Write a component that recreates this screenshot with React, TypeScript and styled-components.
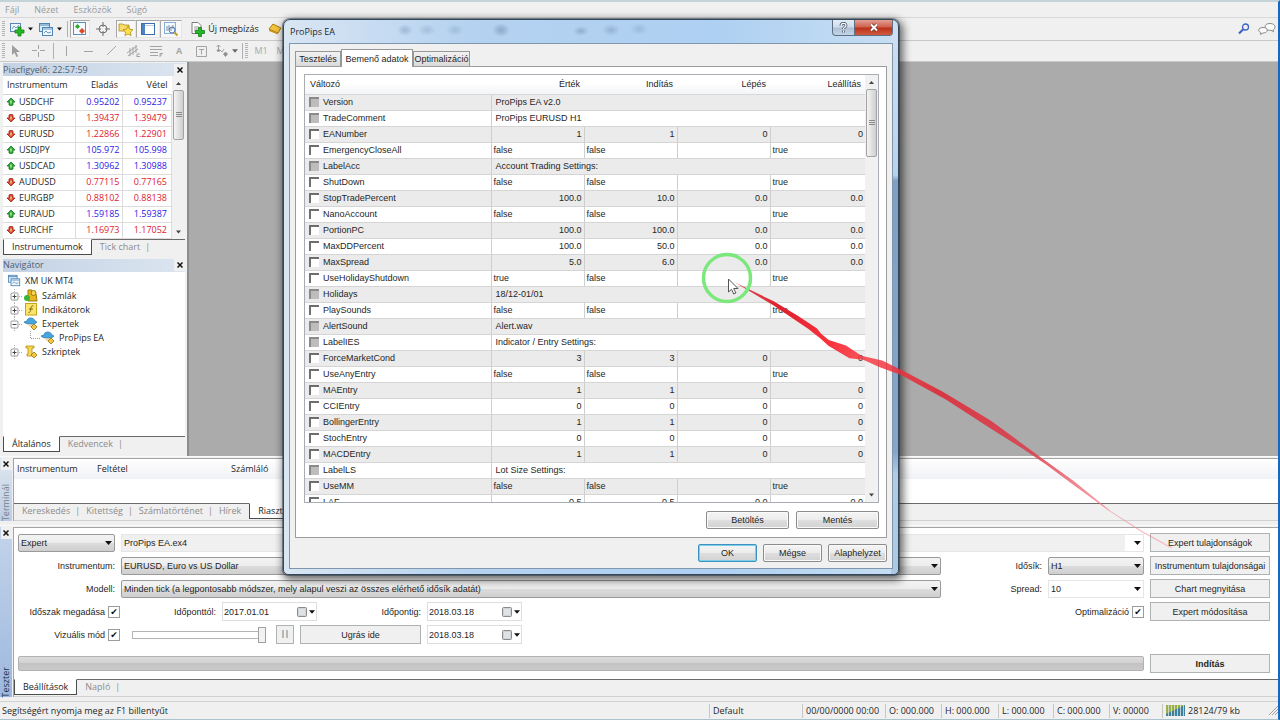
import React from "react";
import styled, { createGlobalStyle, css } from "styled-components";

const UI = `"Open Sans", "Noto Sans", sans-serif`;
const DIALOG = `"Liberation Sans", Arial, sans-serif`;

const GlobalStyle = createGlobalStyle`
  *, *::before, *::after { box-sizing: border-box; }
  body { margin: 0; background: #1c6fc4; }
  button, input, select { font: inherit; color: inherit; margin: 0; }
  table { border-collapse: collapse; border-spacing: 0; }
  svg { flex: none; }
`;

/* ---------- main window ---------- */

const Window = styled.div`
  position: relative;
  display: flex;
  flex-direction: column;
  min-height: 100vh;
  overflow: hidden;
  background: #f0f0f0;
  border-top: 2px solid #c3d3d8;
  border-right: 2px solid #1668c0;
  border-bottom: 2px solid #a9c3cc;
  font: 9px/14px ${UI};
  color: #1f1f1f;
`;

const MenuBar = styled.nav`
  display: flex;
  gap: 15px;
  height: 16px;
  padding-left: 5px;
  border-bottom: 1px solid #d8d8d8;
`;

const MenuItem = styled.button`
  padding: 0;
  border: 0;
  background: none;
  color: #9a9a9a;
`;

const Toolbar = styled.div<{ $h: number }>`
  display: flex;
  align-items: center;
  height: ${(p) => p.$h}px;
  padding: 0 0 0 2px;
  border-bottom: 1px solid #c9c9c9;
`;

const Grip = styled.span`
  width: 3px;
  height: 16px;
  margin-right: 2px;
  background: repeating-linear-gradient(#b4b4b4 0 1px, #f0f0f0 1px 2px);
`;

const Divider = styled.span`
  width: 1px;
  height: 16px;
  margin: 0 2px;
  background: #b0b0b0;
`;

const Tool = styled.button<{ $w?: number; $on?: boolean }>`
  display: flex;
  align-items: center;
  justify-content: center;
  gap: 3px;
  width: ${(p) => (p.$w ? `${p.$w}px` : "auto")};
  height: 18px;
  padding: 0;
  border: 1px solid transparent;
  background: none;
  white-space: nowrap;
  color: #1c1c1c;
  ${(p) =>
    p.$on &&
    css`
      border-color: #a8a8a8 #e6e6e6 #e6e6e6 #a8a8a8;
      background: #f8f8f8;
    `}
`;

const FadedTool = styled(Tool)`
  color: #a8a8a8;
`;

const Spacer = styled.span`
  flex: 1;
`;

const Workspace = styled.main`
  display: flex;
  flex: 1;
  min-height: 394px;
  background: #ababab;
`;

const Sidebar = styled.aside`
  display: flex;
  flex-direction: column;
  width: 189px;
  padding: 1px 2px 4px 3px;
  gap: 4px;
  background: #f0f0f0;
  border-right: 2px solid #8c8c8c;
`;

const Panel = styled.section<{ $grow?: boolean }>`
  display: flex;
  flex-direction: column;
  flex: ${(p) => (p.$grow ? 1 : "none")};
`;

const PanelTitle = styled.header`
  display: flex;
  justify-content: space-between;
  align-items: center;
  height: 13px;
  background: linear-gradient(90deg, #c3d2e4, #dbe5f0);
  color: #4f5f70;
`;

const CloseButton = styled.button`
  display: flex;
  align-items: center;
  justify-content: center;
  width: 11px;
  height: 12px;
  padding: 0;
  border: 0;
  background: #f0f0f0;
`;

const PanelBody = styled.div`
  display: flex;
  flex: 1;
  background: #fff;
`;

const QuoteTable = styled.table`
  flex: 1;
  table-layout: fixed;
  background: #fff;
  th {
    height: 18px;
    padding: 0 4px;
    font-weight: 400;
    text-align: right;
    border-bottom: 1px solid #d4d4d4;
  }
  th:first-child { text-align: left; }
  td {
    height: 16px;
    padding: 0 2px 0 0;
    line-height: 12px;
    border-right: 1px solid #dcdcdc;
    border-bottom: 1px solid #dcdcdc;
  }
  td:last-child { padding-right: 4px; }
`;

const Price = styled.td<{ $up: boolean }>`
  font: 9px/12px ${UI};
  text-align: right;
  color: ${(p) => (p.$up ? "#2d20e6" : "#e0202f")};
`;

const SymbolName = styled.span`
  display: flex;
  align-items: center;
  gap: 4px;
  padding-left: 4px;
`;

const ScrollTrack = styled.div<{ $w: number }>`
  display: flex;
  flex-direction: column;
  align-items: center;
  width: ${(p) => p.$w}px;
  background: #f1f1f1;
`;

const ScrollArrow = styled.button`
  display: flex;
  align-items: center;
  justify-content: center;
  width: 100%;
  height: 14px;
  padding: 0;
  border: 0;
  background: none;
`;

const ScrollThumb = styled.div<{ $h: number }>`
  display: flex;
  align-items: center;
  justify-content: center;
  width: 11px;
  height: ${(p) => p.$h}px;
  margin-bottom: auto;
  border: 1px solid #a3a3a3;
  border-radius: 2px;
  background: linear-gradient(90deg, #f4f4f4, #cfcfcf);
`;

const Tabs = styled.div`
  display: flex;
  height: 16px;
  border-top: 1px solid #6a6a6a;
`;

const Tab = styled.button<{ $active?: boolean; $bare?: boolean }>`
  height: 16px;
  margin-top: -1px;
  padding: 0 8px;
  border: 0;
  background: none;
  color: #8c8c8c;
  white-space: nowrap;
  ${(p) =>
    p.$active &&
    css`
      border: 1px solid #4c4c4c;
      border-top-color: #fff;
      background: #fff;
      color: #1c1c1c;
    `}
  ${(p) =>
    !p.$active &&
    !p.$bare &&
    css`
      &::after {
        content: "|";
        margin-left: 5px;
        margin-right: -10px;
      }
    `}
`;

const Tree = styled.ul`
  flex: 1;
  margin: 0;
  padding: 1px 0 0 5px;
  list-style: none;
`;

const TreeItem = styled.li<{ $depth: number }>`
  display: flex;
  align-items: center;
  gap: 4px;
  height: 14px;
  margin: ${(p) => (p.$depth ? "0" : "1px 0")};
  padding-left: ${(p) => [0, 2, 22][p.$depth]}px;
  white-space: nowrap;
`;

/* ---------- bottom docks ---------- */

const Dock = styled.section`
  display: flex;
  padding-top: 1px;
  margin-bottom: 4px;
  border-top: 1px solid #fafafa;
`;

const DockStrip = styled.div<{ $strong?: boolean }>`
  display: flex;
  flex-direction: column;
  align-items: center;
  justify-content: space-between;
  width: 12px;
  margin-right: 1px;
  background: ${(p) =>
    p.$strong ? "linear-gradient(#c3d4ea, #9db8de)" : "linear-gradient(#dfe8f2, #bccce0)"};
  color: ${(p) => (p.$strong ? "#24344a" : "#718093")};
`;

const DockName = styled.span`
  writing-mode: vertical-rl;
  transform: rotate(180deg);
  line-height: 12px;
`;

const DockBody = styled.div`
  display: flex;
  flex-direction: column;
  flex: 1;
  min-width: 0;
  border-top: 1px solid #a4a4a4;
  border-left: 1px solid #a4a4a4;
  background: #fff;
`;

const DockTabs = styled(Tabs)`
  height: 18px;
  background: #f0f0f0;
  border-bottom: 1px solid #d0d0d0;
`;

const AlertTable = styled.table`
  table-layout: fixed;
  width: 100%;
  height: 44px;
  th {
    height: 20px;
    padding: 0 0 0 3px;
    font-weight: 400;
    text-align: left;
    background: linear-gradient(#fff, #f1f2f5);
  }
  td { padding: 0; }
`;

const Form = styled.form`
  display: grid;
  grid-template-columns: 1fr 120px;
  column-gap: 6px;
  row-gap: 4px;
  padding: 5px 8px 6px 4px;
  font: 9px/12px ${DIALOG};
  color: #1f1f1f;
`;

const Line = styled.div`
  display: flex;
  align-items: center;
  gap: 6px;
  height: 19px;
`;

const Caption = styled.label<{ $w: number }>`
  width: ${(p) => p.$w}px;
  flex: none;
  text-align: right;
  white-space: nowrap;
`;

const CheckCaption = styled.label<{ $w: number }>`
  display: flex;
  align-items: center;
  justify-content: flex-end;
  gap: 3px;
  width: ${(p) => p.$w}px;
  white-space: nowrap;
`;

const CheckBox = styled.input`
  appearance: none;
  width: 12px;
  height: 12px;
  border: 1px solid #9c9c9c;
  background: #fff;
  display: grid;
  place-items: center;
  &:checked::before {
    content: "✔";
    font: 9px/10px "DejaVu Sans", sans-serif;
    color: #111;
  }
`;

const SelectWrap = styled.span<{ $w?: number }>`
  display: grid;
  align-items: center;
  width: ${(p) => (p.$w ? `${p.$w}px` : "auto")};
  flex: ${(p) => (p.$w ? "none" : 1)};
  min-width: 0;
  > * { grid-area: 1 / 1; }
  > svg { justify-self: end; margin-right: 3px; pointer-events: none; }
`;

const SelectBox = styled.select<{ $look?: "plain" | "flat" }>`
  appearance: none;
  width: 100%;
  height: 18px;
  padding: 0 16px 0 2px;
  border: 1px solid #9a9a9a;
  border-radius: 2px;
  background: linear-gradient(#f3f3f3 0%, #ececec 50%, #dcdcdc 51%, #cfcfcf 100%);
  ${(p) =>
    p.$look &&
    css`
      border-color: #e6e6e6;
      border-radius: 0;
      background: ${p.$look === "flat"
        ? "linear-gradient(90deg, #f0f0f0 calc(100% - 18px), #fff 0)"
        : "#fff"};
    `}
`;

const DateBox = styled.span`
  display: flex;
  align-items: center;
  gap: 2px;
  width: 95px;
  height: 19px;
  padding: 0 3px 0 1px;
  border: 1px solid #dedede;
  background: #fff;
`;

const DateInput = styled.input`
  width: 71px;
  padding: 0;
  border: 0;
  outline: 0;
`;

const FormButton = styled.button<{ $w?: number; $bold?: boolean }>`
  width: ${(p) => (p.$w ? `${p.$w}px` : "100%")};
  height: 19px;
  padding: 0;
  border: 1px solid #adb2b5;
  background: #f0f0f0;
  font-weight: ${(p) => (p.$bold ? 700 : 400)};
  white-space: nowrap;
`;

const Slider = styled.input`
  appearance: none;
  width: 134px;
  height: 16px;
  margin: 0 4px 0 6px;
  background: linear-gradient(#b4b4b4, #b4b4b4) 0 4px / 100% 1px no-repeat,
    linear-gradient(#b4b4b4, #b4b4b4) 0 11px / 100% 1px no-repeat,
    linear-gradient(#b4b4b4, #b4b4b4) 0 4px / 1px 8px no-repeat;
  &::-webkit-slider-thumb {
    appearance: none;
    width: 8px;
    height: 16px;
    border: 1px solid #a0a0a0;
    background: #f2f2f2;
  }
`;

const ProgressTrack = styled.div`
  width: 100%;
  height: 15px;
  border: 1px solid #b2b2b2;
  border-radius: 2px;
  background: linear-gradient(#dcdcdc 0%, #d2d2d2 45%, #c3c3c3 50%, #cacaca 100%);
`;

const RunLine = styled(Line)`
  margin-top: 6px;
`;

const StatusBar = styled.footer`
  display: flex;
  align-items: center;
  height: 18px;
  border-top: 1px solid #d2d2d2;
`;

const StatusCell = styled.span<{ $w?: number }>`
  display: flex;
  align-items: center;
  gap: 3px;
  width: ${(p) => (p.$w ? `${p.$w}px` : "auto")};
  flex: ${(p) => (p.$w ? "none" : 1)};
  padding-left: ${(p) => (p.$w ? 3 : 2)}px;
  border-left: ${(p) => (p.$w ? "1px solid #c6c6c6" : "0")};
  white-space: nowrap;
`;

/* ---------- properties dialog ---------- */

const Dialog = styled.div`
  position: absolute;
  left: 283px;
  top: 17px;
  width: 616px;
  padding: 0 5px 5px;
  border: 1px solid #34465a;
  border-radius: 7px 7px 5px 5px;
  background:
    linear-gradient(#cfe0f0, #b9d2ec 28%, #7f9fc6 29%, #86a5cb 78%, #b3cce4 82%, #adc8e2) right / 7px 100% no-repeat,
    linear-gradient(90deg, #d9e6f3, #b5d2f0 30%, #aed0f2 70%, #c7def3);
  box-shadow: 0 0 0 1px rgba(40, 55, 72, 0.5), 2px 3px 9px 2px rgba(0, 0, 0, 0.6);
  font: 9px/12px ${DIALOG};
  color: #262626;
`;

const TitleBar = styled.header`
  display: flex;
  align-items: flex-start;
  height: 23px;
  padding-left: 1px;
  background:
    radial-gradient(8px 6px at 116px 10px, rgba(90, 120, 160, 0.35), transparent),
    radial-gradient(9px 6px at 138px 10px, rgba(90, 120, 160, 0.25), transparent),
    radial-gradient(9px 6px at 166px 10px, rgba(90, 120, 160, 0.25), transparent),
    radial-gradient(9px 7px at 212px 10px, rgba(80, 105, 145, 0.4), transparent),
    radial-gradient(8px 5px at 292px 11px, rgba(80, 105, 145, 0.35), transparent),
    radial-gradient(9px 6px at 322px 10px, rgba(90, 120, 160, 0.35), transparent),
    radial-gradient(9px 6px at 350px 9px, rgba(90, 120, 160, 0.25), transparent);
`;

const DialogTitle = styled.h1`
  flex: 1;
  margin: 5px 0 0;
  font: 9px/14px ${UI};
  color: #1d2733;
`;

const CaptionButton = styled.button<{ $close?: boolean }>`
  display: flex;
  align-items: center;
  justify-content: center;
  width: ${(p) => (p.$close ? 38 : 23)}px;
  height: 16px;
  padding: 0;
  border: 1px solid #5e7086;
  border-top: 0;
  border-left-width: ${(p) => (p.$close ? 0 : 1)}px;
  border-radius: ${(p) => (p.$close ? "0 0 4px 0" : "0 0 0 4px")};
  background: ${(p) =>
    p.$close
      ? "linear-gradient(#e2a093 0%, #d0604c 48%, #bb3019 52%, #cf5a40 100%)"
      : "linear-gradient(#e4edf6 0%, #cfdcea 48%, #adc0d5 52%, #c4d4e6 100%)"};
`;

const Client = styled.div`
  padding: 5px 5px 6px;
  border: 1px solid #8096ac;
  background: #f0f0f0;
`;

const DialogTabs = styled.div`
  display: flex;
  align-items: flex-end;
  height: 17px;
`;

const DialogTab = styled.button<{ $active?: boolean; $w: number }>`
  position: relative;
  width: ${(p) => p.$w}px;
  height: ${(p) => (p.$active ? 18 : 15)}px;
  margin-bottom: ${(p) => (p.$active ? -1 : 0)}px;
  padding: 0;
  border: 1px solid #979797;
  border-bottom: 0;
  background: ${(p) => (p.$active ? "#fff" : "linear-gradient(#f2f2f2, #dadada)")};
  color: #1f1f1f;
  white-space: nowrap;
`;

const Pane = styled.div`
  padding: 7px 7px 8px 8px;
  border: 1px solid #9c9c9c;
  background: #fff;
`;

const ListBox = styled.div`
  display: flex;
  height: 429px;
  border: 1px solid #a8adb3;
  overflow: hidden;
`;

const ParamTable = styled.table`
  flex: 1;
  align-self: flex-start;
  table-layout: fixed;
  th {
    height: 19px;
    padding: 0 4px 0 5px;
    font-weight: 400;
    text-align: right;
    background: linear-gradient(#fff 40%, #f3f4f6);
    border-bottom: 1px solid #d8d8d8;
  }
  th:first-child { text-align: left; }
`;

const ParamRow = styled.tr`
  &:nth-child(odd) { background: #ebebeb; }
`;

const Cell = styled.td<{ $align?: "right"; $last?: boolean }>`
  height: 16px;
  padding: 0 2px;
  border-bottom: 1px solid #d5d5d5;
  border-right: ${(p) => (p.$last ? "0" : "1px solid #cfcfcf")};
  text-align: ${(p) => p.$align ?? "left"};
  white-space: nowrap;
`;

const TextCell = styled(Cell)`
  padding-left: 4px;
`;

const ParamName = styled.label`
  display: flex;
  align-items: center;
  gap: 4px;
  padding-left: 2px;
`;

const ParamCheck = styled.input`
  appearance: none;
  width: 10px;
  height: 10px;
  border: solid #6e6e6e;
  border-width: 2px 0 0 2px;
  background: #fff;
  &:disabled { background: #bdbdbd; border-color: #8a8a8a; }
`;

const ButtonRow = styled.div<{ $gap: number; $top: number }>`
  display: flex;
  justify-content: flex-end;
  gap: ${(p) => p.$gap}px;
  margin-top: ${(p) => p.$top}px;
`;

const DialogButton = styled.button<{ $w: number; $primary?: boolean }>`
  width: ${(p) => p.$w}px;
  height: 18px;
  padding: 0;
  border: 1px solid ${(p) => (p.$primary ? "#3c93bd" : "#8c8c8c")};
  border-radius: 2px;
  background: linear-gradient(#f4f4f4 0%, #ececec 48%, #dedede 52%, #d2d2d2 100%);
  box-shadow: inset 0 0 0 1px ${(p) => (p.$primary ? "#7fcdec" : "#fafafa")};
  color: #1f1f1f;
`;

const Ink = styled.svg`
  position: absolute;
  left: 0;
  top: -2px;
  pointer-events: none;
`;

/* ---------- small drawings ---------- */

const Caret = ({ size = 7, color = "#111" }: { size?: number; color?: string }) => (
  <svg width={size} height="4" viewBox="0 0 7 4"><path d="M0 0h7L3.500 4z" fill={color} /></svg>
);
const CaretUp = () => (
  <svg width="5" height="3" viewBox="0 0 7 4"><path d="M0 4h7L3.500 0z" fill="#444" /></svg>
);
const Cross = () => (
  <svg width="6" height="6" viewBox="0 0 6 6"><path d="M.5 .5l5 5M5.500 .5l-5 5" stroke="#111" strokeWidth="1.500" /></svg>
);
const ThumbLines = () => (
  <svg width="6" height="6" viewBox="0 0 6 6"><path d="M0 .5h6M0 2.500h6M0 4.500h6" stroke="#8b8b8b" /></svg>
);
const Plus = ({ x, y, s = 1 }: { x: number; y: number; s?: number }) => (
  <path transform={`translate(${x} ${y}) scale(${s})`} d="M3 0h3v3h3v3h-3v3h-3v-3h-3v-3h3z" fill="#25b825" stroke="#128012" strokeWidth=".8" />
);
const NewChartIcon = () => (
  <svg width="15" height="15" viewBox="0 0 15 15">
    <rect x=".5" y="1.500" width="10" height="8" fill="#eef6fd" stroke="#5a87b3" />
    <path d="M2 7l2-3 2 2 3-3" stroke="#76a3cc" fill="none" /><Plus x={5} y={5} />
  </svg>
);
const ProfilesIcon = ({ size = 15 }: { size?: number }) => (
  <svg width={size} height={size} viewBox="0 0 15 15">
    <rect x=".5" y="1.500" width="10" height="8" fill="#dcebf8" stroke="#4f86b8" /><path d="M.5 3h10" stroke="#4f86b8" />
    <rect x="3.500" y="5.500" width="10" height="8" fill="#f2f8fd" stroke="#4f86b8" /><path d="M3.500 7h10M5 11l2-2 2 2 3-1" stroke="#5f94c4" fill="none" />
  </svg>
);
const WatchIcon = () => (
  <svg width="14" height="14" viewBox="0 0 14 14">
    <rect x=".5" y=".5" width="12" height="12" fill="#f5fafe" stroke="#5c8fc0" />
    <path d="M4.500 2l2.500 2.500-2.500 2.500-2.500-2.500z" fill="#2aa92a" /><path d="M9 6l3 3-3 3-3-3z" fill="#dd4a26" />
  </svg>
);
const TargetIcon = () => (
  <svg width="14" height="14" viewBox="0 0 14 14" fill="none" stroke="#6d6d6d">
    <circle cx="7" cy="7" r="4" /><path d="M7 0v5M7 9v5M0 7h5M9 7h5" />
  </svg>
);
const FolderStarIcon = () => (
  <svg width="16" height="15" viewBox="0 0 16 15" stroke="#b08a14" strokeWidth=".8">
    <path d="M1 2h4l1 1h5v6H1z" fill="#f9dc6a" />
    <path d="M10 4l1.600 3.200 3.400.5-2.500 2.400.6 3.500L10 12l-3.100 1.600.6-3.500L5 7.700l3.400-.5z" fill="#fce04a" />
  </svg>
);
const NavigatorIcon = () => (
  <svg width="14" height="13" viewBox="0 0 14 13">
    <rect x=".5" y=".5" width="13" height="11" fill="#fff" stroke="#3d6fae" /><path d="M1 1h3v10H1z" fill="#4f83c4" /><path d="M4 2.500h9" stroke="#b9cfe8" />
  </svg>
);
const StrategyIcon = () => (
  <svg width="15" height="15" viewBox="0 0 15 15" fill="none">
    <rect x=".5" y=".5" width="11" height="11" fill="#f3f8fd" stroke="#87aed4" />
    <path d="M3 9V4M5 8V3M7 9V5M9 7V3" stroke="#7c8ea3" /><circle cx="8" cy="8" r="3" stroke="#4c77b4" /><path d="M10.500 10.500l3 3" stroke="#c79a24" strokeWidth="2" />
  </svg>
);
const OrderIcon = () => (
  <svg width="14" height="15" viewBox="0 0 14 15">
    <path d="M1 .5h6l3 3v8H1z" fill="#fff" stroke="#7b7b7b" /><path d="M3 5h5M3 7h4M3 9h3" stroke="#9a9a9a" /><Plus x={4.500} y={5.500} />
  </svg>
);
const GoldIcon = () => (
  <svg width="14" height="12" viewBox="0 0 14 12">
    <path d="M5 1l8 4-3 5-9-4z" fill="#f3c53a" stroke="#a97b10" /><path d="M1 6l9 4v1.500L1 8z" fill="#c8921c" />
  </svg>
);
const SearchIcon = () => (
  <svg width="12" height="12" viewBox="0 0 12 12" fill="none" stroke="#3b63c4">
    <circle cx="7.500" cy="4" r="3" strokeWidth="1.300" /><path d="M5 6.500L1 10.500" strokeWidth="2.200" />
  </svg>
);
const ChatIcon = () => (
  <svg width="18" height="14" viewBox="0 0 18 14" fill="#fbfbfb" stroke="#8a8a8a">
    <path d="M12 1.500c3 0 5 1.300 5 3.300s-1 2.400-2 3l.6 2-2.600-1.500c-4 .3-6-1.300-6-3.500s2-3.300 5-3.300z" />
    <path d="M5 5.500c2.500 0 4.300 1 4.300 2.700S7.500 11 5 11l-2.500 1.500.3-2C1.500 10 .7 9.300 .7 8.200.7 6.500 2.500 5.500 5 5.500z" />
  </svg>
);
const CursorIcon = () => (
  <svg width="10" height="14" viewBox="0 0 10 14"><path d="M1 1v10l2.500-2.300L5.500 13l1.700-.8-2-4.200H9z" fill="#9e9e9e" /></svg>
);
const LineIcon = ({ d, w = 14 }: { d: string; w?: number }) => (
  <svg width={w} height="14" viewBox={`0 0 ${w} 14`} fill="none" stroke="#a3a3a3"><path d={d} /></svg>
);
const ShapesIcon = () => (
  <svg width="14" height="14" viewBox="0 0 14 14" fill="#8f8f8f" stroke="#8f8f8f" strokeWidth=".8">
    <path d="M3.500 1v4M1.500 3l2-2 2 2M5 6l2 2 2-3" fill="none" /><path d="M3.500 5l1.500 1.500-1.500 1.500-1.500-1.500z" /><path d="M10.500 8l2 2-2 2.500-2-2.500z" />
  </svg>
);
const Arrow = ({ up }: { up: boolean }) => (
  <svg width="8" height="8" viewBox="0 0 8 8">
    <path d={up ? "M4 0l4 4-2 0v3l-2 1-2-1V4H0z" : "M4 8L0 4h2V1l2-1 2 1v3h2z"} fill={up ? "#2fae35" : "#e0492a"} stroke={up ? "#14751a" : "#97250f"} strokeWidth=".8" />
    <path d="M4 2.500v3" stroke="#fff" />
  </svg>
);
const Expander = ({ open }: { open?: boolean }) => (
  <svg width="10" height="14" viewBox="0 0 10 14" fill="none" overflow="visible">
    <path d="M4.500 0v3M4.500 11v3M9 7.500h4" stroke="#b2b2b2" strokeDasharray="1 1" />
    <rect x="1" y="4" width="7" height="7" rx="1" fill="#fff" stroke="#9a9a9a" />
    <path d={open ? "M2.500 7.500h4" : "M2.500 7.500h4M4.500 5.500v4"} stroke="#444" />
  </svg>
);
const Elbow = () => (
  <svg width="7" height="14" viewBox="0 0 7 14" overflow="visible"><path d="M.5 0v7.500H10" fill="none" stroke="#9a9a9a" strokeDasharray="1 1" /></svg>
);
const AccountsIcon = () => (
  <svg width="14" height="13" viewBox="0 0 14 13">
    <path d="M4 1l4 0v4h4l1 7H4z" fill="#e8b71d" stroke="#a3790b" /><circle cx="9.500" cy="4" r="2.500" fill="#f7d652" stroke="#a3790b" /><circle cx="3" cy="9" r="3" fill="#36b53a" />
  </svg>
);
const IndicatorIcon = () => (
  <svg width="14" height="13" viewBox="0 0 14 13">
    <rect x="1.500" y=".5" width="11" height="11.500" fill="#fbe569" stroke="#c4a41c" /><path d="M9.500 3c-2-.8-2.500 1-2.700 3S6 10 4.500 9.500M5 6h4" fill="none" stroke="#7b661a" />
  </svg>
);
const ExpertIcon = () => (
  <svg width="14" height="13" viewBox="0 0 14 13">
    <path d="M3 4c0-4 7-4 8 0l2 1c-2 3-10 3-13 0z" fill="#45a5dc" stroke="#1f76ab" strokeWidth=".7" />
    <path d="M4 7c1 4 4 4 6 1z" fill="#f2d6a2" /><path d="M10 7l3 3-3 3-3-3z" fill="#f3c73f" stroke="#937313" strokeWidth=".8" />
  </svg>
);
const ScriptIcon = () => (
  <svg width="14" height="13" viewBox="0 0 14 13">
    <path d="M2 1h8v2H8v6h2v2H3V9h1V3H2z" fill="#f7d850" stroke="#b08d18" strokeWidth=".8" /><path d="M10 7l3 3-3 3-3-3z" fill="#f3c73f" stroke="#937313" strokeWidth=".8" />
  </svg>
);
const CalendarIcon = () => (
  <svg width="10" height="10" viewBox="0 0 10 10">
    <rect x=".5" y=".5" width="9" height="9" rx="1" fill="#cfd2d6" stroke="#8b8b8b" /><path d="M2 3h6M2 5h6M2 7h6" stroke="#f2f2f2" />
  </svg>
);
const TrafficIcon = () => (
  <svg width="19" height="11" viewBox="0 0 19 11">
    <path d="M0 0h19v11H0z" fill="#3f7fa0" /><path d="M0 0h19L0 9z" fill="#9ab04a" />
    <path d="M2.500 0v11M5.500 0v11M8.500 0v11M11.500 0v11M14.500 0v11M17.500 0v11" stroke="#dbe5da" strokeWidth=".8" />
  </svg>
);
const SizeGrip = () => (
  <svg width="9" height="9" viewBox="0 0 9 9"><path d="M0 9l9-9M3 9l6-6M6 9l3-3" stroke="#9f9f9f" /></svg>
);

/* ---------- data ---------- */

const quotes: [string, string, string, boolean][] = [
  ["USDCHF", "0.95202", "0.95237", true],
  ["GBPUSD", "1.39437", "1.39479", false],
  ["EURUSD", "1.22866", "1.22901", false],
  ["USDJPY", "105.972", "105.998", true],
  ["USDCAD", "1.30962", "1.30988", true],
  ["AUDUSD", "0.77115", "0.77165", false],
  ["EURGBP", "0.88102", "0.88138", false],
  ["EURAUD", "1.59185", "1.59387", true],
  ["EURCHF", "1.16973", "1.17052", false],
];

type Param = { name: string; text?: string; flag?: string; nums?: string[] };
const params: Param[] = [
  { name: "Version", text: "ProPips EA v2.0" },
  { name: "TradeComment", text: "ProPips EURUSD H1" },
  { name: "EANumber", nums: ["1", "1", "0", "0"] },
  { name: "EmergencyCloseAll", flag: "false" },
  { name: "LabelAcc", text: "Account Trading Settings:" },
  { name: "ShutDown", flag: "false" },
  { name: "StopTradePercent", nums: ["100.0", "10.0", "0.0", "0.0"] },
  { name: "NanoAccount", flag: "false" },
  { name: "PortionPC", nums: ["100.0", "100.0", "0.0", "0.0"] },
  { name: "MaxDDPercent", nums: ["100.0", "50.0", "0.0", "0.0"] },
  { name: "MaxSpread", nums: ["5.0", "6.0", "0.0", "0.0"] },
  { name: "UseHolidayShutdown", flag: "true" },
  { name: "Holidays", text: "18/12-01/01" },
  { name: "PlaySounds", flag: "false" },
  { name: "AlertSound", text: "Alert.wav" },
  { name: "LabelIES", text: "Indicator / Entry Settings:" },
  { name: "ForceMarketCond", nums: ["3", "3", "0", "0"] },
  { name: "UseAnyEntry", flag: "false" },
  { name: "MAEntry", nums: ["1", "1", "0", "0"] },
  { name: "CCIEntry", nums: ["0", "0", "0", "0"] },
  { name: "BollingerEntry", nums: ["1", "1", "0", "0"] },
  { name: "StochEntry", nums: ["0", "0", "0", "0"] },
  { name: "MACDEntry", nums: ["1", "1", "0", "0"] },
  { name: "LabelLS", text: "Lot Size Settings:" },
  { name: "UseMM", flag: "false" },
  { name: "LAF", nums: ["0.5", "0.5", "0.0", "0.0"] },
];

/* ---------- sections ---------- */

const Select = ({ id, label, value, w, look }: { id: string; label?: string; value: string; w?: number; look?: "plain" | "flat" }) => (
  <SelectWrap $w={w}>
    <SelectBox id={id} aria-label={label} $look={look}><option>{value}</option></SelectBox>
    <Caret />
  </SelectWrap>
);

const DateField = ({ id, value, label }: { id: string; value: string; label?: string }) => (
  <DateBox>
    <DateInput id={id} aria-label={label} defaultValue={value} />
    <CalendarIcon />
    <Caret size={6} />
  </DateBox>
);

const Scrollbar = ({ w, thumb }: { w: number; thumb: number }) => (
  <ScrollTrack $w={w}>
    <ScrollArrow aria-label="Fel"><CaretUp /></ScrollArrow>
    <ScrollThumb $h={thumb}><ThumbLines /></ScrollThumb>
    <ScrollArrow aria-label="Le"><Caret size={5} color="#444" /></ScrollArrow>
  </ScrollTrack>
);

const Toolbars = () => (
  <>
    <MenuBar>
      {["Fájl", "Nézet", "Eszközök", "Súgó"].map((m) => <MenuItem key={m}>{m}</MenuItem>)}
    </MenuBar>
    <Toolbar $h={23}>
      <Grip />
      <Tool $w={28} aria-label="Új chart"><NewChartIcon /><Caret size={5} /></Tool>
      <Tool $w={30} aria-label="Profilok"><ProfilesIcon /><Caret size={5} /></Tool>
      <Divider />
      <Tool $w={20} $on aria-label="Piacfigyelő"><WatchIcon /></Tool>
      <Tool $w={26} aria-label="Adatablak"><TargetIcon /></Tool>
      <Tool $w={20} $on aria-label="Navigátor"><FolderStarIcon /></Tool>
      <Tool $w={24} $on aria-label="Terminál"><NavigatorIcon /></Tool>
      <Tool $w={22} $on aria-label="Teszter"><StrategyIcon /></Tool>
      <Tool $w={86}><OrderIcon />Új megbízás</Tool>
      <Tool $w={14} aria-label="MetaEditor"><GoldIcon /></Tool>
      <Spacer />
      <Tool $w={24} aria-label="Keresés"><SearchIcon /></Tool>
      <Tool $w={22} aria-label="Csevegés"><ChatIcon /></Tool>
    </Toolbar>
    <Toolbar $h={21}>
      <Grip />
      <FadedTool $w={18} aria-label="Kurzor"><CursorIcon /></FadedTool>
      <FadedTool $w={26} aria-label="Szálkereszt"><LineIcon d="M7.500 1v4M7.500 8v5M1 6.500h5M9 6.500h5" /></FadedTool>
      <Divider />
      <FadedTool $w={20} aria-label="Függőleges"><LineIcon d="M7.500 2v10" /></FadedTool>
      <FadedTool $w={24} aria-label="Vízszintes"><LineIcon d="M3 7.500h9" /></FadedTool>
      <FadedTool $w={22} aria-label="Trend"><LineIcon d="M3 11l9-9" /></FadedTool>
      <FadedTool $w={22} aria-label="Csatorna"><LineIcon d="M1 9l10-7M2 12l10-7M4 4v8M7 3v8M10 1v8M11 10h3M11 12.500h3M11 10v3" /></FadedTool>
      <FadedTool $w={24} aria-label="Fibonacci"><LineIcon d="M1 2.500h12M1 5.500h12M1 8.500h8M1 11.500h8M11 13V9.500h3M11 11h2" /></FadedTool>
      <FadedTool $w={22}><b>A</b></FadedTool>
      <FadedTool $w={22} aria-label="Felirat"><LineIcon d="M2.500 2.500h10v10h-10zM5 5.500h5M7.500 5.500v5" /></FadedTool>
      <FadedTool $w={28} aria-label="Nyilak"><ShapesIcon /><Caret size={6} color="#666" /></FadedTool>
      <Divider /><Grip />
      <FadedTool $w={22}>M1</FadedTool>
      <FadedTool $w={22}>M5</FadedTool>
    </Toolbar>
  </>
);

const MarketWatch = () => (
  <Panel>
    <PanelTitle>Piacfigyelő: 22:57:59<CloseButton aria-label="Bezárás"><Cross /></CloseButton></PanelTitle>
    <PanelBody>
      <QuoteTable>
        <colgroup><col style={{ width: 72 }} /><col style={{ width: 47 }} /><col /></colgroup>
        <thead><tr><th>Instrumentum</th><th>Eladás</th><th>Vétel</th></tr></thead>
        <tbody>
          {quotes.map(([name, bid, ask, up]) => (
            <tr key={name}>
              <td><SymbolName><Arrow up={up} />{name}</SymbolName></td>
              <Price $up={up}>{bid}</Price>
              <Price $up={up}>{ask}</Price>
            </tr>
          ))}
        </tbody>
      </QuoteTable>
      <Scrollbar w={13} thumb={50} />
    </PanelBody>
    <Tabs><Tab $active>Instrumentumok</Tab><Tab>Tick chart</Tab></Tabs>
  </Panel>
);

const Navigator = () => (
  <Panel $grow>
    <PanelTitle>Navigátor<CloseButton aria-label="Bezárás"><Cross /></CloseButton></PanelTitle>
    <PanelBody>
      <Tree>
        <TreeItem $depth={0}><ProfilesIcon size={13} />XM UK MT4</TreeItem>
        <TreeItem $depth={1}><Expander /><AccountsIcon />Számlák</TreeItem>
        <TreeItem $depth={1}><Expander /><IndicatorIcon />Indikátorok</TreeItem>
        <TreeItem $depth={1}><Expander open /><ExpertIcon />Expertek</TreeItem>
        <TreeItem $depth={2}><Elbow /><ExpertIcon />ProPips EA</TreeItem>
        <TreeItem $depth={1}><Expander /><ScriptIcon />Szkriptek</TreeItem>
      </Tree>
    </PanelBody>
    <Tabs><Tab $active>Általános</Tab><Tab>Kedvencek</Tab></Tabs>
  </Panel>
);

const Terminal = () => (
  <Dock>
    <DockStrip><CloseButton aria-label="Bezárás"><Cross /></CloseButton><DockName>Terminál</DockName></DockStrip>
    <DockBody>
      <AlertTable>
        <colgroup><col style={{ width: 80 }} /><col style={{ width: 134 }} /><col /></colgroup>
        <thead><tr><th>Instrumentum</th><th>Feltétel</th><th>Számláló</th></tr></thead>
        <tbody><tr><td colSpan={3} /></tr></tbody>
      </AlertTable>
      <DockTabs>
        <Tab>Kereskedés</Tab><Tab>Kitettség</Tab><Tab>Számlatörténet</Tab><Tab $bare>Hírek</Tab><Tab $active>Riasztások</Tab>
      </DockTabs>
    </DockBody>
  </Dock>
);

const Tester = () => (
  <Dock>
    <DockStrip $strong><CloseButton aria-label="Bezárás"><Cross /></CloseButton><DockName>Teszter</DockName></DockStrip>
    <DockBody>
      <Form onSubmit={(e) => e.preventDefault()}>
        <Line>
          <Select id="kind" label="Típus" value="Expert" w={97} />
          <Select id="expert" label="Expert" value="ProPips EA.ex4" look="flat" />
        </Line>
        <FormButton type="button">Expert tulajdonságok</FormButton>
        <Line>
          <Caption $w={97} htmlFor="symbol">Instrumentum:</Caption>
          <Select id="symbol" value="EURUSD, Euro vs US Dollar" />
          <Caption $w={95} htmlFor="period">Idősík:</Caption>
          <Select id="period" value="H1" w={96} />
        </Line>
        <FormButton type="button">Instrumentum tulajdonságai</FormButton>
        <Line>
          <Caption $w={97} htmlFor="model">Modell:</Caption>
          <Select id="model" value="Minden tick (a legpontosabb módszer, mely alapul veszi az összes elérhető idősík adatát)" />
          <Caption $w={95} htmlFor="spread">Spread:</Caption>
          <Select id="spread" value="10" w={96} look="plain" />
        </Line>
        <FormButton type="button">Chart megnyitása</FormButton>
        <Line>
          <CheckCaption $w={102}>Időszak megadása<CheckBox type="checkbox" defaultChecked /></CheckCaption>
          <Caption $w={90} htmlFor="from">Időponttól:</Caption>
          <DateField id="from" value="2017.01.01" />
          <Caption $w={98} htmlFor="to">Időpontig:</Caption>
          <DateField id="to" value="2018.03.18" />
          <Spacer />
          <CheckCaption $w={96}>Optimalizáció<CheckBox type="checkbox" defaultChecked /></CheckCaption>
        </Line>
        <FormButton type="button">Expert módosítása</FormButton>
        <Line>
          <CheckCaption $w={102}>Vizuális mód<CheckBox type="checkbox" defaultChecked /></CheckCaption>
          <Slider type="range" aria-label="Sebesség" defaultValue={100} />
          <FormButton type="button" $w={18} aria-label="Szünet">
            <svg width="6" height="8" viewBox="0 0 6 8"><path d="M1 0v8M5 0v8" stroke="#a9a39a" strokeWidth="1.500" /></svg>
          </FormButton>
          <FormButton type="button" $w={121}>Ugrás ide</FormButton>
          <DateField id="jump" label="Ugrás dátuma" value="2018.03.18" />
        </Line>
        <span />
        <RunLine><ProgressTrack role="progressbar" aria-label="Folyamat" /></RunLine>
        <RunLine><FormButton type="button" $bold>Indítás</FormButton></RunLine>
      </Form>
      <DockTabs><Tab $active>Beállítások</Tab><Tab>Napló</Tab></DockTabs>
    </DockBody>
  </Dock>
);

const Status = () => (
  <StatusBar>
    <StatusCell>Segítségért nyomja meg az F1 billentyűt</StatusCell>
    <StatusCell $w={93}>Default</StatusCell>
    <StatusCell $w={83}>00/00/0000 00:00</StatusCell>
    <StatusCell $w={56}>O: 000.000</StatusCell>
    <StatusCell $w={57}>H: 000.000</StatusCell>
    <StatusCell $w={55}>L: 000.000</StatusCell>
    <StatusCell $w={56}>C: 000.000</StatusCell>
    <StatusCell $w={53}>V: 00000</StatusCell>
    <StatusCell $w={107}><TrafficIcon />28124/79 kb</StatusCell>
    <SizeGrip />
  </StatusBar>
);

const ParamCells = ({ p }: { p: Param }) => {
  if (p.text) return <TextCell colSpan={4} $last>{p.text}</TextCell>;
  if (p.nums) return <>{p.nums.map((n, i) => <Cell key={i} $align="right" $last={i === 3}>{n}</Cell>)}</>;
  return <><Cell>{p.flag}</Cell><Cell>false</Cell><Cell /><Cell $last>true</Cell></>;
};

const PropertiesDialog = () => (
  <Dialog role="dialog" aria-labelledby="dlg-title">
    <TitleBar>
      <DialogTitle id="dlg-title">ProPips EA</DialogTitle>
      <CaptionButton aria-label="Súgó">
        <svg width="9" height="11" viewBox="0 0 9 11" fill="none">
          <path d="M2 4c0-3.500 5-3.500 5-.5 0 1.800-2.500 1.800-2.500 3.500M4.500 8.500v2" stroke="#3e5068" strokeWidth="2.800" />
          <path d="M2 4c0-3.500 5-3.500 5-.5 0 1.800-2.500 1.800-2.500 3.500M4.500 8.500v2" stroke="#fff" strokeWidth="1.300" />
        </svg>
      </CaptionButton>
      <CaptionButton $close aria-label="Bezárás">
        <svg width="10" height="9" viewBox="0 0 10 9"><path d="M2 1.500l6 6M8 1.500l-6 6" stroke="#6b3028" strokeWidth="3.400" /><path d="M2 1.500l6 6M8 1.500l-6 6" stroke="#fff" strokeWidth="2" /></svg>
      </CaptionButton>
    </TitleBar>
    <Client>
      <DialogTabs>
        <DialogTab $w={46}>Tesztelés</DialogTab>
        <DialogTab $w={72} $active>Bemenő adatok</DialogTab>
        <DialogTab $w={57}>Optimalizáció</DialogTab>
      </DialogTabs>
      <Pane>
        <ListBox>
          <ParamTable>
            <colgroup>
              <col style={{ width: 186 }} /><col style={{ width: 93 }} /><col style={{ width: 93 }} /><col style={{ width: 93 }} /><col />
            </colgroup>
            <thead><tr><th>Változó</th><th>Érték</th><th>Indítás</th><th>Lépés</th><th>Leállítás</th></tr></thead>
            <tbody>
              {params.map((p) => (
                <ParamRow key={p.name}>
                  <Cell><ParamName><ParamCheck type="checkbox" disabled={!!p.text} />{p.name}</ParamName></Cell>
                  <ParamCells p={p} />
                </ParamRow>
              ))}
            </tbody>
          </ParamTable>
          <Scrollbar w={13} thumb={68} />
        </ListBox>
        <ButtonRow $gap={7} $top={8}>
          <DialogButton $w={83}>Betöltés</DialogButton>
          <DialogButton $w={83}>Mentés</DialogButton>
        </ButtonRow>
      </Pane>
      <ButtonRow $gap={6} $top={6}>
        <DialogButton $w={59} $primary>OK</DialogButton>
        <DialogButton $w={59}>Mégse</DialogButton>
        <DialogButton $w={59}>Alaphelyzet</DialogButton>
      </ButtonRow>
    </Client>
  </Dialog>
);

const Annotation = () => (
  <Ink width="1280" height="720" viewBox="0 0 1280 720">
    <defs>
      <linearGradient id="fade" gradientUnits="userSpaceOnUse" x1="215" y1="125" x2="1485" y2="893">
        <stop offset="0" stopColor="#d0303c" stopOpacity=".8" />
        <stop offset=".1" stopColor="#e0202c" />
        <stop offset=".22" stopColor="#f8323c" />
        <stop offset=".3" stopColor="#f8323c" stopOpacity=".8" />
        <stop offset=".45" stopColor="#dc2c38" stopOpacity=".9" />
        <stop offset=".68" stopColor="#dc3c4a" stopOpacity=".85" />
        <stop offset=".82" stopColor="#f06c7a" stopOpacity=".7" />
        <stop offset="1" stopColor="#f5909a" stopOpacity=".45" />
      </linearGradient>
    </defs>
    <path
      transform="translate(660 240) scale(.3444)"
      fill="url(#fade)"
      d="M215 122L330 178L400 220L455 256L468 272L490 290L540 306L585 336L645 350L710 382L820 440L960 524L1100 627L1200 699L1310 788L1400 845L1488 893L1484 896L1400 849L1300 784L1200 711L1120 651L1050 604L960 547L830 463L700 392L640 370L590 348L550 343L490 308L465 285L430 258L330 190z"
    />
    <circle cx="727" cy="278" r="23.500" fill="none" stroke="#7be87b" strokeWidth="3.500" />
    <path d="M728.500 279v13l3-2.700 2.200 4.700 2.200-1-2.200-4.500h4.300z" fill="#fff" stroke="#555" />
  </Ink>
);

export default function App() {
  return (
    <>
      <GlobalStyle />
      <Window>
        <Toolbars />
        <Workspace>
          <Sidebar><MarketWatch /><Navigator /></Sidebar>
        </Workspace>
        <Terminal />
        <Tester />
        <Status />
        <PropertiesDialog />
        <Annotation />
      </Window>
    </>
  );
}
